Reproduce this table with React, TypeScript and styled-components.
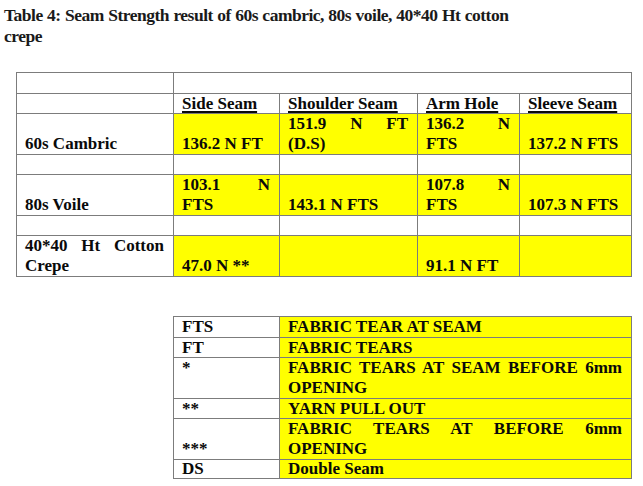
import React from 'react'
import styled, { createGlobalStyle } from 'styled-components'

const Global = createGlobalStyle`
  body {
    margin: 0;
    background: #fff;
    font-family: "Liberation Serif", "Times New Roman", serif;
    color: #111;
  }
`

const Page = styled.div`
  width: 643px;
  height: 486px;
  display: flex;
  flex-direction: column;
  overflow: hidden;
`

const Title = styled.h1`
  margin: 5px 0 0 4px;
  width: 520px;
  font-family: "Liberation Serif", Georgia, serif;
  font-weight: bold;
  font-size: 17.5px;
  line-height: 20.5px;
  letter-spacing: -0.5px;
  word-spacing: 0.5px;
  color: #1a1a1a;
`

const Grid = styled.table<{ $left: number; $top: number; $w: number }>`
  width: ${p => p.$w}px;
  margin: ${p => p.$top}px 0 0 ${p => p.$left}px;
  border-collapse: collapse;
  table-layout: fixed;
  font-family: "Liberation Serif", "Times New Roman", serif;
  font-weight: bold;
  font-size: 17px;
  line-height: 20px;
  color: #0a0a0a;
`

const Col = styled.col<{ $w: number }>`
  width: ${p => p.$w}px;
`

const Cell = styled.td<{ $hl?: boolean; $top?: boolean; $h?: number }>`
  border: 1px solid #7c7c7c;
  padding: 0 9px 0 8px;
  height: ${p => p.$h ?? 19}px;
  font: inherit;
  line-height: ${p => ((p.$h ?? 19) >= 39 ? 20 : p.$h ?? 19)}px;
  background: ${p => (p.$hl ? '#ffff00' : '#fff')};
  vertical-align: ${p => (p.$top ? 'top' : 'bottom')};
  text-align: justify;
  text-align-last: left;
  overflow: hidden;
`

const Head = styled.span`
  text-decoration: underline;
  text-underline-offset: 2px;
  text-decoration-thickness: 1.5px;
`

type Row = { label: string; vals: string[]; h: number }

const rows: Row[] = [
  { label: '60s Cambric', vals: ['136.2 N FT', '151.9 N FT (D.S)', '136.2 N FTS', '137.2 N FTS'], h: 40 },
  { label: '80s Voile', vals: ['103.1 N FTS', '143.1 N FTS', '107.8 N FTS', '107.3 N FTS'], h: 40 },
  { label: '40*40 Ht Cotton Crepe', vals: ['47.0 N **', '', '91.1 N FT', ''], h: 39 },
]

const heads = ['Side Seam', 'Shoulder Seam', 'Arm Hole', 'Sleeve Seam']
const mainCols = [157, 106, 138, 102, 112]

const legend: { key: string; text: string; top?: boolean; h?: number }[] = [
  { key: 'FTS', text: 'FABRIC TEAR AT SEAM', h: 20 },
  { key: 'FT', text: 'FABRIC TEARS' },
  { key: '*', text: 'FABRIC TEARS AT SEAM BEFORE 6mm OPENING', top: true, h: 40 },
  { key: '**', text: 'YARN PULL OUT' },
  { key: '***', text: 'FABRIC TEARS AT BEFORE 6mm OPENING', h: 40 },
  { key: 'DS', text: 'Double Seam', h: 18 },
]

export default function App() {
  return (
    <Page>
      <Global />
      <Title>Table 4: Seam Strength result of 60s cambric, 80s voile, 40*40 Ht cotton crepe</Title>

      <Grid $left={16} $top={26} $w={615}>
        <colgroup>
          {mainCols.map((w, i) => <Col key={i} $w={w} />)}
        </colgroup>
        <tbody>
          <tr>
            <Cell $h={20} />
            <Cell $h={20} colSpan={4} />
          </tr>
          <tr>
            <Cell />
            {heads.map(h => (
              <Cell key={h}><Head>{h}</Head></Cell>
            ))}
          </tr>
          {rows.map((r, i) => (
            <React.Fragment key={r.label}>
              {i > 0 && (
                <tr>
                  <Cell />
                  {heads.map(h => <Cell key={h} />)}
                </tr>
              )}
              <tr>
                <Cell $h={r.h}>{r.label}</Cell>
                {r.vals.map((v, j) => (
                  <Cell key={j} $hl $h={r.h}>{v}</Cell>
                ))}
              </tr>
            </React.Fragment>
          ))}
        </tbody>
      </Grid>

      <Grid $left={173} $top={39} $w={458}>
        <colgroup>
          <Col $w={106} />
          <Col $w={352} />
        </colgroup>
        <tbody>
          {legend.map(l => (
            <tr key={l.key}>
              <Cell $top={l.top} $h={l.h}>{l.key}</Cell>
              <Cell $hl $h={l.h}>{l.text}</Cell>
            </tr>
          ))}
        </tbody>
      </Grid>
    </Page>
  )
}
